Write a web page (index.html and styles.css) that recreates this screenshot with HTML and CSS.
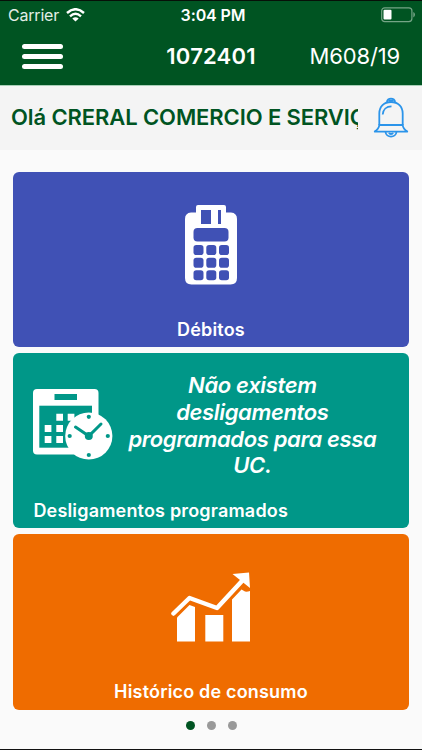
FILE: index.html
```
<!DOCTYPE html>
<html lang="pt-BR">
  <head>
    <meta charset="UTF-8" />
    <meta name="viewport" content="width=device-width, initial-scale=1.0" />
    <title>Início</title>
    <link rel="stylesheet" href="styles.css">
  </head>
  <body>
    <header class="top">
      <div class="status">
        <div class="carrier">
          <span>Carrier</span>
          <svg class="wifi" viewBox="0 0 19 14">
            <path d="M1 5 Q9.5 -2.6 18 5" />
            <path d="M4 8.3 Q9.5 3.4 15 8.3" />
            <path class="fill" d="M6.3 10.6 Q9.5 8 12.7 10.6 L9.5 13.6 Z" />
          </svg>
        </div>
        <span class="time">3:04 PM</span>
        <svg class="battery" viewBox="0 0 35 16">
          <rect class="case" x="0.7" y="0.8" width="30.2" height="13.8" rx="3" />
          <rect class="level" x="2.5" y="2.8" width="8" height="9.7" rx="1" />
          <path class="tip" d="M32.3 5 Q34 5.8 34 7.7 Q34 9.6 32.3 10.4 Z" />
        </svg>
      </div>
      <div class="nav">
        <button class="menu" aria-label="Menu"><span></span><span></span><span></span></button>
        <span class="unit">1072401</span>
        <span class="meter">M608/19</span>
      </div>
    </header>

    <div class="greeting">
      <p class="name">Olá CRERAL COMERCIO E SERVIÇ</p>
      <svg class="bell" viewBox="0 0 36 42">
        <path d="M14 5.5 C13.8 0.2 22.2 0.2 22 5.5" />
        <path d="M15.8 4.2 C16.4 3.1 19.6 3.1 20.2 4.2" />
        <path d="M6.3 28 V16.5 C6.3 9.5 11 5 18 5 C25 5 29.7 9.5 29.7 16.5 V28" />
        <path d="M6.3 28 C6 31.5 4.4 33 1.2 34.7 H34.8 C31.6 33 30 31.5 29.7 28 Z" />
        <path d="M9.7 17.5 C10 12.5 13.5 9.4 18.5 9.4" />
        <path d="M12.5 34.7 C13 41.3 23 41.3 23.5 34.7 M16 35.7 C16.5 37.4 19.5 37.4 20 35.7" />
      </svg>
    </div>

    <main class="cards">
      <section class="card debits">
        <svg class="pos-icon" viewBox="0 0 52 80">
          <path class="white" d="M6 7.5 H11 V2 Q11 0 13 0 H39 Q41 0 41 2 V7.5 H46 Q52 8 52 14 V73 Q52 79.5 45.5 79.5 H6.5 Q0 79.5 0 73 V14 Q0 8 6 7.5 Z" />
          <rect x="16" y="5" width="10" height="14" />
          <rect x="33" y="5" width="3" height="14" />
          <rect x="8.5" y="23" width="35" height="13.5" rx="4" />
          <rect x="8.5" y="40" width="10" height="10" rx="2.8" />
          <rect x="21.3" y="40" width="10" height="10" rx="2.8" />
          <rect x="34" y="40" width="10" height="10" rx="2.8" />
          <rect x="8.5" y="52.7" width="10" height="10" rx="2.8" />
          <rect x="21.3" y="52.7" width="10" height="10" rx="2.8" />
          <rect x="34" y="52.7" width="10" height="10" rx="2.8" />
          <rect x="8.5" y="65.3" width="10" height="10" rx="2.8" />
          <rect x="21.3" y="65.3" width="10" height="10" rx="2.8" />
          <rect x="34" y="65.3" width="10" height="10" rx="2.8" />
        </svg>
        <p class="label">Débitos</p>
      </section>

      <section class="card outages">
        <div class="outage-row">
          <svg class="calendar-icon" viewBox="0 0 80 72">
            <rect class="white" x="0" y="0" width="65.5" height="65.5" rx="4" />
            <rect x="21.5" y="5" width="22.5" height="6" />
            <rect x="6.3" y="16.7" width="52.7" height="42" />
            <path class="white" d="M23.3 24.7h6.7v7h-6.7z M34.7 24.7h6.7v7h-6.7z M11.7 36h6.7v7h-6.7z M23.3 36h6.7v7h-6.7z M11.7 47h6.7v7h-6.7z M23.3 47h6.7v7h-6.7z" />
            <circle class="white" cx="55.8" cy="47" r="23.6" />
            <circle cx="55.8" cy="27.8" r="2.1" />
            <circle cx="36.7" cy="47" r="2.1" />
            <circle cx="74.8" cy="47" r="2.1" />
            <circle cx="55.8" cy="66" r="2.1" />
            <circle cx="55.8" cy="47" r="4" />
            <path class="hands" d="M42.5 38 L55.8 47 L68 35" />
          </svg>
          <p class="message">Não existem desligamentos programados para essa UC.</p>
        </div>
        <p class="label">Desligamentos programados</p>
      </section>

      <section class="card history">
        <svg class="chart-icon" viewBox="0 0 80 70">
          <path class="white" d="M6 45.5 L18.5 33 L24 35 V69.5 H6 Z" />
          <path class="white" d="M34.3 43 H52.3 V69.5 H34.3 Z" />
          <path class="white" d="M61 27.5 L70.5 17.5 L74 19.5 Q76 20 79 19 V69.5 H61 Z" />
          <path class="trend" d="M2.5 41.5 L18.5 26 L46 36 L71 9" />
          <path class="white" d="M61.5 2 L78 0.5 L79 16 Z" />
        </svg>
        <p class="label">Histórico de consumo</p>
      </section>
    </main>

    <footer class="dots">
      <span class="dot active"></span>
      <span class="dot"></span>
      <span class="dot"></span>
    </footer>
  </body>
</html>
```
FILE: styles.css
```
* {
  box-sizing: border-box;
}
body {
  margin: 0;
  height: 750px;
  overflow: hidden;
  display: flex;
  flex-direction: column;
  background-color: #fafafa;
  border-top: 1px solid #061008;
  border-bottom: 1px solid #111;
  font-family: Inter, "Liberation Sans", sans-serif;
}
p {
  margin: 0;
}
svg {
  display: block;
}
.top {
  height: 84px;
  flex: none;
  background-color: #005422;
  color: white;
}
.status {
  height: 28px;
  display: grid;
  grid-template-columns: 1fr auto 1fr;
  align-items: center;
  padding: 0 6px 0 8px;
  font-size: 16px;
}
.carrier {
  display: flex;
  align-items: center;
  gap: 7px;
  color: #e3eee7;
  letter-spacing: -0.2px;
}
.wifi {
  width: 19px;
  height: 14px;
  fill: none;
  stroke: white;
  stroke-width: 2.4;
}
.wifi .fill {
  fill: white;
  stroke: none;
}
.time {
  padding-left: 2px;
  font-weight: 600;
  letter-spacing: -0.1px;
}
.battery {
  width: 35px;
  height: 16px;
  justify-self: end;
}
.case {
  fill: none;
  stroke: #75a486;
  stroke-width: 1.2;
}
.level {
  fill: white;
}
.tip {
  fill: #75a486;
}
.nav {
  height: 55px;
  display: grid;
  grid-template-columns: 1fr auto 1fr;
  align-items: center;
  padding: 0 22px;
  font-size: 22px;
}
.menu {
  width: 41px;
  display: flex;
  flex-direction: column;
  gap: 5px;
  padding: 0;
  border: none;
  background: none;
}
.menu span {
  height: 5px;
  border-radius: 3px;
  background-color: white;
}
.unit {
  padding-bottom: 2px;
  font-weight: 600;
  letter-spacing: 0.2px;
}
.meter {
  padding-bottom: 2px;
  justify-self: end;
  letter-spacing: -0.15px;
}
.greeting {
  height: 65px;
  flex: none;
  display: flex;
  align-items: center;
  gap: 15px;
  padding: 0 11px 1px;
  background-color: #f4f4f4;
  border-top: 1px solid #a9cfb8;
}
.name {
  width: 347px;
  padding-bottom: 2px;
  overflow: hidden;
  white-space: nowrap;
  font-size: 22px;
  line-height: 30px;
  font-weight: 600;
  letter-spacing: -0.1px;
  color: #005422;
}
.bell {
  width: 36px;
  height: 42px;
  fill: none;
  stroke: #2b94ea;
  stroke-width: 1.8;
}
.cards {
  display: flex;
  flex-direction: column;
  gap: 6px;
  padding: 22px 13.5px 0 13.4px;
}
.card {
  height: 175.2px;
  display: flex;
  flex-direction: column;
  align-items: center;
  justify-content: space-between;
  padding-bottom: 6px;
  border-radius: 6px;
  color: white;
}
.debits {
  padding-top: 33px;
  background-color: #4051b5;
  fill: #4051b5;
}
.outages {
  align-items: stretch;
  padding: 19px 20px 6px;
  background-color: #009788;
  fill: #009788;
}
.history {
  padding: 38px 0 7px;
  background-color: #ef6c00;
}
.white {
  fill: white;
}
.label {
  font-size: 18px;
  line-height: 22px;
  font-weight: 600;
  letter-spacing: 0.18px;
}
.pos-icon {
  width: 52px;
  height: 80px;
}
.outage-row {
  display: flex;
  gap: 6px;
}
.calendar-icon {
  flex: none;
  width: 80px;
  height: 72px;
  margin-top: 17px;
}
.hands {
  fill: none;
  stroke: #009788;
  stroke-width: 3;
  stroke-linecap: round;
}
.message {
  width: 266px;
  margin-right: -6px;
  text-align: center;
  font-size: 22px;
  line-height: 26.7px;
  font-style: italic;
  font-weight: 600;
  letter-spacing: -0.35px;
}
.chart-icon {
  width: 80px;
  height: 70px;
}
.trend {
  fill: none;
  stroke: white;
  stroke-width: 4.5;
  stroke-linecap: round;
  stroke-linejoin: round;
}
.dots {
  display: flex;
  justify-content: center;
  gap: 12px;
  padding-top: 11px;
}
.dot {
  width: 9px;
  height: 9px;
  border-radius: 50%;
  background-color: #999;
}
.active {
  background-color: #005422;
}
```
